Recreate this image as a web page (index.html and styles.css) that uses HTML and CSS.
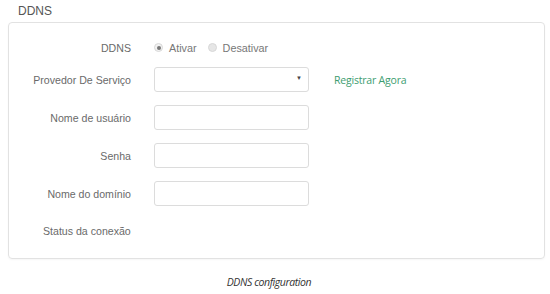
FILE: index.html
```html
<!DOCTYPE html>
<html lang="pt">
<head>
  <meta charset="UTF-8">
  <title>DDNS</title>
  <link rel="stylesheet" href="styles.css">
</head>
<body>
  <h2 class="title">DDNS</h2>
  <div class="panel">
    <div class="row row-first">
      <label class="lbl">DDNS</label>
      <div class="radios">
        <span class="radio checked"></span><span class="radio-text">Ativar</span>
        <span class="radio"></span><span class="radio-text">Desativar</span>
      </div>
    </div>
    <div class="row">
      <label class="lbl">Provedor De Serviço</label>
      <div class="select"><span class="arrow">▼</span></div>
      <a class="link" href="#">Registrar Agora</a>
    </div>
    <div class="row">
      <label class="lbl">Nome de usuário</label>
      <div class="input"></div>
    </div>
    <div class="row">
      <label class="lbl">Senha</label>
      <div class="input"></div>
    </div>
    <div class="row">
      <label class="lbl">Nome do domínio</label>
      <div class="input"></div>
    </div>
    <div class="row row-status">
      <label class="lbl lbl-left">Status da conexão</label>
    </div>
  </div>
  <p class="caption">DDNS configuration</p>
</body>
</html>
```

FILE: styles.css
```css
body {
  margin: 0;
  background: #fff;
  font-family: 'Liberation Sans', Arial, sans-serif;
  color: #666;
  width: 550px;
}
.title {
  margin: 0;
  padding: 4px 0 0 18px;
  height: 18px;
  font-size: 12px;
  font-weight: normal;
  color: #555;
  line-height: 14px;
}
.panel {
  margin: 0 5px 0 8px;
  height: 237px;
  border: 1px solid #e2e2e2;
  border-radius: 4px;
  box-shadow: 0 1px 2px rgba(0,0,0,0.04);
  box-sizing: border-box;
  padding-top: 12px;
}
.row {
  display: flex;
  align-items: center;
  height: 25px;
  margin-bottom: 13px;
}
.row-first {
  margin-bottom: 7px;
}
.row-status {
  margin-top: -1px;
}
.lbl {
  width: 122px;
  text-align: right;
  font-size: 10.6px;
  color: #6a6a6a;
  margin-right: 23px;
  flex-shrink: 0;
  white-space: nowrap;
}
.lbl-left {
  text-align: left;
  padding-left: 34px;
  box-sizing: border-box;
}
.radios {
  display: flex;
  align-items: center;
  font-size: 10.8px;
  color: #777;
}
.radio {
  width: 9px;
  height: 9px;
  border-radius: 50%;
  background: #e6e6e6;
  border: 1px solid #d8d8d8;
  box-sizing: border-box;
  margin: 0 6px 0 0;
  position: relative;
}
.radio.checked {
  background: #f2f2f2;
}
.radio.checked::after {
  content: '';
  position: absolute;
  left: 1.5px;
  top: 1.5px;
  width: 4px;
  height: 4px;
  border-radius: 50%;
  background: #777;
}
.radio-text {
  margin-right: 11px;
}
.select, .input {
  width: 155px;
  height: 25px;
  border: 1px solid #dcdcdc;
  border-radius: 3px;
  box-sizing: border-box;
  background: #fff;
  flex-shrink: 0;
}
.select {
  position: relative;
}
.arrow {
  position: absolute;
  right: 6px;
  top: 7px;
  font-size: 6px;
  color: #444;
}
.link {
  margin-left: 25px;
  font-family: 'Open Sans', sans-serif;
  font-size: 10.5px;
  color: #3d9d70;
  text-decoration: none;
  letter-spacing: -0.2px;
}
.caption {
  margin: 16px 0 0;
  text-align: center;
  font-family: 'Open Sans', sans-serif;
  font-style: italic;
  font-size: 10.5px;
  color: #333;
  letter-spacing: -0.4px;
  padding-right: 12px;
}
```
